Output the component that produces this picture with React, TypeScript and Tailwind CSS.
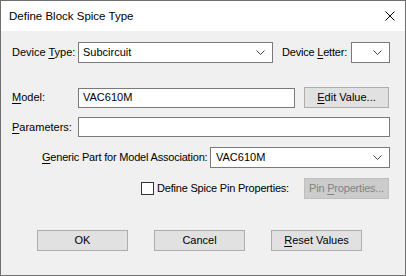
import React from "react";

const Chevron = () => (
  <svg width="9" height="5" viewBox="0 0 9 5" className="block">
    <polyline points="0.5,0.5 4.5,4.5 8.5,0.5" fill="none" stroke="#444" strokeWidth="1" />
  </svg>
);

const U = ({ children }: { children: React.ReactNode }) => <span className="underline underline-offset-[2px]">{children}</span>;

function Combo({ w, text, pl = "pl-[4px]" }: { w: string; text?: string; pl?: string }) {
  return (
    <div className={`${w} h-[21px] bg-white border border-[#7a7a7a] flex items-center justify-between ${pl} pr-[7px]`}>
      <span className="leading-none">{text}</span>
      <Chevron />
    </div>
  );
}

function Btn({ w, children, disabled }: { w: string; children: React.ReactNode; disabled?: boolean }) {
  return (
    <div
      className={`${w} h-[21px] flex items-center justify-center border whitespace-nowrap ${
        disabled ? "bg-[#cccccc] border-[#bfbfbf] text-[#838383]" : "bg-[#e1e1e1] border-[#adadad] text-black"
      }`}
    >
      {children}
    </div>
  );
}

export default function App() {
  return (
    <div
      className="w-[406px] h-[276px] border border-[#6f6f6f] flex flex-col text-black"
      style={{ fontFamily: '"Liberation Sans", Arial, sans-serif' }}
    >
      <div className="h-[30px] bg-white flex items-center justify-between pl-[8px] pr-[10px] shrink-0">
        <span className="text-[11.5px] pt-[1px]">Define Block Spice Type</span>
        <svg width="10" height="10" viewBox="0 0 10 10" className="block">
          <path d="M0.5 0.5 L9.5 9.5 M9.5 0.5 L0.5 9.5" stroke="#000" strokeWidth="1" fill="none" />
        </svg>
      </div>
      <div className="flex-1 bg-[#f0f0f0] text-[11px] pt-[11px]">
        {/* Row 1 */}
        <div className="flex items-center h-[21px] pl-[11px]">
          <span className="w-[66px] whitespace-nowrap">
            Device <U>T</U>ype:
          </span>
          <Combo w="w-[195px]" text="Subcircuit" />
          <span className="ml-[9px] w-[69px] whitespace-nowrap tracking-[-0.2px]">
            Device <U>L</U>etter:
          </span>
          <Combo w="w-[39px]" />
        </div>
        {/* Row 2 */}
        <div className="flex items-center h-[21px] pl-[11px] mt-[24px]">
          <span className="w-[66px]">
            <U>M</U>odel:
          </span>
          <div className="w-[217px] h-[20px] bg-white border border-[#7a7a7a] flex items-center pl-[4px]">VAC610M</div>
          <div className="ml-[9px]">
            <Btn w="w-[85px]">
              <span>
                <U>E</U>dit Value...
              </span>
            </Btn>
          </div>
        </div>
        {/* Row 3 */}
        <div className="flex items-center h-[20px] pl-[11px] mt-[9px]">
          <span className="w-[66px]">
            <U>P</U>arameters:
          </span>
          <div className="w-[312px] h-[20px] bg-white border border-[#7a7a7a]" />
        </div>
        {/* Row 4 */}
        <div className="flex items-center h-[21px] pl-[41px] mt-[10px]">
          <span className="w-[168px] whitespace-nowrap tracking-[-0.2px]">
            <U>G</U>eneric Part for Model Association:
          </span>
          <Combo w="w-[180px]" text="VAC610M" pl="pl-[5px]" />
        </div>
        {/* Row 5 */}
        <div className="flex items-center h-[21px] pl-[140px] mt-[10px]">
          <div className="w-[13px] h-[13px] bg-white border border-[#333333]" />
          <span className="ml-[3px] w-[147px] whitespace-nowrap tracking-[-0.2px]">Define Spice Pin Properties:</span>
          <Btn w="w-[85px]" disabled>
            <span className="tracking-[-0.2px]">
              Pin <U>P</U>roperties...
            </span>
          </Btn>
        </div>
        {/* Buttons */}
        <div className="flex items-center pl-[36px] mt-[31px] gap-[26px]">
          <Btn w="w-[91px]">OK</Btn>
          <Btn w="w-[91px]">Cancel</Btn>
          <Btn w="w-[91px]">
            <span>
              <U>R</U>eset Values
            </span>
          </Btn>
        </div>
      </div>
    </div>
  );
}
